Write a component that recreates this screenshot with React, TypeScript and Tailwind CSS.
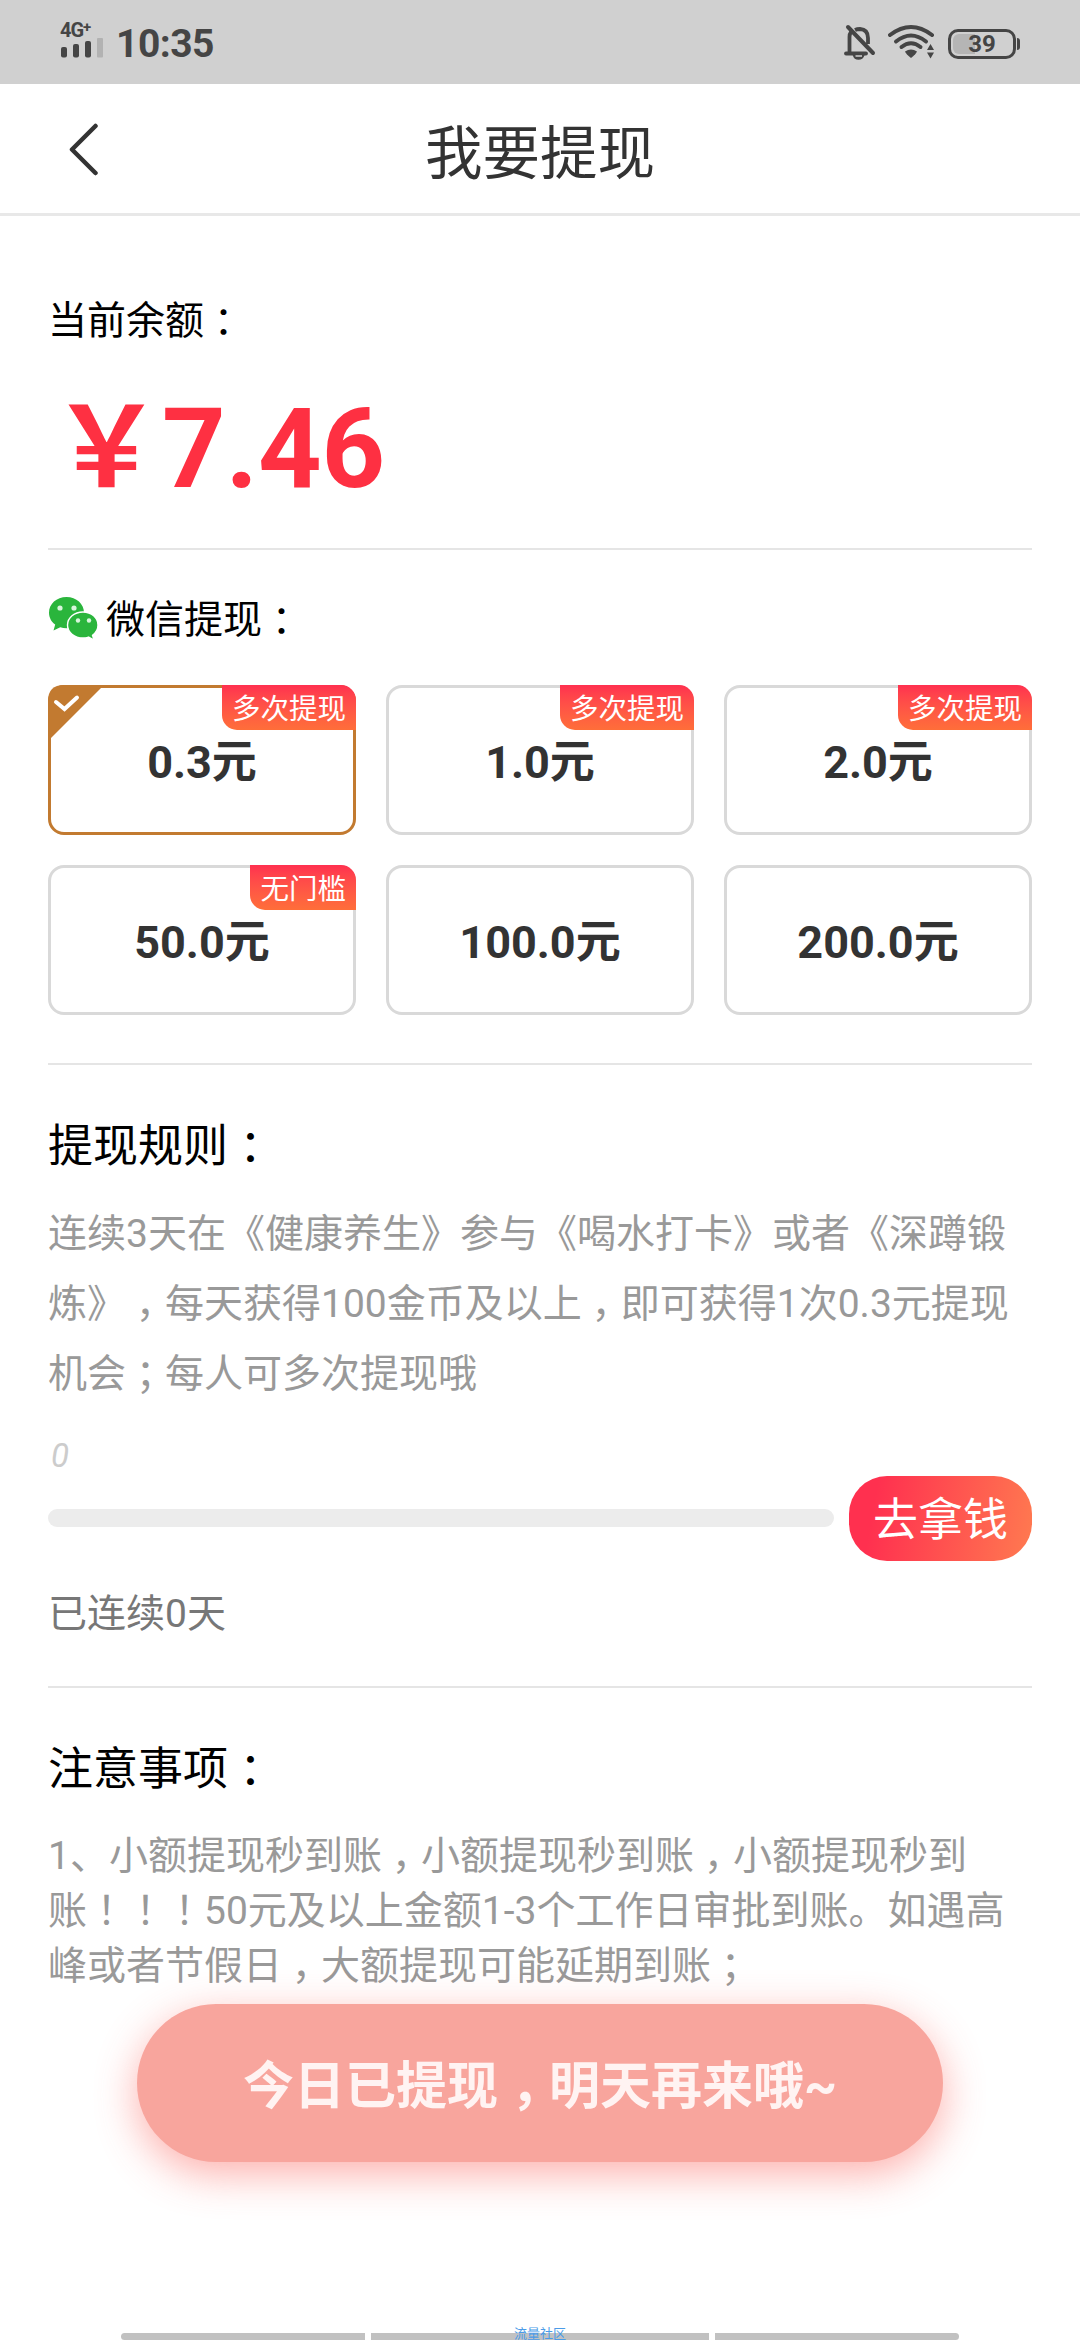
import { Fragment } from "react"
import { clsx } from "clsx"

type Amount = {
  id: number
  label: string
  tag?: string
}

const amounts: Amount[] = [
  { id: 1, label: "0.3元", tag: "多次提现" },
  { id: 2, label: "1.0元", tag: "多次提现" },
  { id: 3, label: "2.0元", tag: "多次提现" },
  { id: 4, label: "50.0元", tag: "无门槛" },
  { id: 5, label: "100.0元" },
  { id: 6, label: "200.0元" },
]

const rules = [
  "连续3天在《健康养生》参与《喝水打卡》或者《深蹲锻",
  "炼》，每天获得100金币及以上，即可获得1次0.3元提现",
  "机会；每人可多次提现哦",
]

const notes = [
  "1、小额提现秒到账，小额提现秒到账，小额提现秒到",
  "账！！！50元及以上金额1-3个工作日审批到账。如遇高",
  "峰或者节假日，大额提现可能延期到账；",
]

// full-width punctuation sits in the middle of its cell
function Cn({ children }: { children: string }) {
  return (
    <>
      {children.split(/([，：；！])/).map((part, i) =>
        /^[，：；！]$/.test(part) ? (
          <span
            key={i}
            className="inline-block w-[1em] text-center [font-feature-settings:'halt']"
          >
            {part}
          </span>
        ) : (
          <Fragment key={i}>{part}</Fragment>
        )
      )}
    </>
  )
}

function StatusBar() {
  return (
    <div className="flex h-[84px] items-start justify-between bg-[#d0d0d0] px-[60px] text-[#454545]">
      <div className="flex">
        <div className="mt-[20px] w-[43px]">
          <p className="h-[18px] text-[20px] leading-[20px] font-bold tracking-[-1px]">
            4G<sup className="-top-[0.35em] text-[15px]">+</sup>
          </p>
          <svg width="43" height="20" viewBox="0 0 43 20">
            <rect x="1" y="9" width="6" height="10.5" rx="2" fill="#454545" />
            <rect x="13" y="6" width="6" height="13.5" rx="2" fill="#454545" />
            <rect x="25" y="3" width="6" height="16.5" rx="2" fill="#454545" />
            <rect x="37" y="0" width="6" height="19.5" rx="1" fill="#b2b2b2" />
          </svg>
        </div>
        <p className="mt-[21px] ml-[13px] text-[39px] leading-[46px] font-bold tracking-[-0.5px]">
          10:35
        </p>
      </div>
      <div className="mt-[24px] flex">
        {/* muted bell */}
        <svg width="32" height="36" viewBox="0 0 32 36" fill="none">
          <path
            d="M5.500 29V13Q5.500 10 7 8M11 6Q13 5 16 5Q24 5.500 24 14V20"
            stroke="#454545"
            strokeWidth="3.800"
          />
          <path d="M2 29.500H22" stroke="#454545" strokeWidth="3.800" strokeLinecap="round" />
          <path d="M9.500 31Q10.500 35 14.500 35T19.800 31Z" fill="#454545" stroke="#454545" strokeWidth="1.500" />
          <path d="M11.500 32H18" stroke="#d0d0d0" strokeWidth="1.500" />
          <path d="M4 3L29 29" stroke="#454545" strokeWidth="4" strokeLinecap="round" />
        </svg>
        {/* wifi */}
        <svg className="ml-[12px]" width="48" height="36" viewBox="0 0 48 36" fill="none">
          <g stroke="#454545" strokeWidth="4" strokeLinecap="round">
            <path d="M2 11Q23 -5 44 11" />
            <path d="M8 17.500Q23 5.500 38 17.500" />
            <path d="M13.500 23Q23 15.500 32.500 23" />
          </g>
          <path d="M17 27.500Q23 23.500 29 27.500Q28 30 23.700 33.500Q23 34 22.300 33.500Q18 30 17 27.500Z" fill="#454545" />
          <path d="M42.500 20L46 26H39ZM42.500 34.500L46 28.500H39Z" fill="#454545" />
        </svg>
        {/* battery */}
        <div className="mt-[3px] ml-[12px] flex items-center">
          <div className="relative flex h-[30px] w-[68px] items-center justify-center rounded-[10px] border-[3px] border-[#454545]">
            <div className="absolute top-[2px] left-[2px] h-[20px] w-[22px] rounded-l-[6px] bg-[#b5b5b5]" />
            <span className="relative text-[24px] leading-[24px] font-bold">39</span>
          </div>
          <div className="ml-px h-[12px] w-[3px] rounded-r-[3px] bg-[#454545]" />
        </div>
      </div>
    </div>
  )
}

function Header() {
  return (
    <div className="flex h-[132px] items-center border-b-[3px] border-[#e8e8e8] px-[69px]">
      <svg className="mt-[2px]" width="30" height="54" viewBox="0 0 30 54" fill="none">
        <path
          d="M26.500 3L3 26.500L26.500 50"
          stroke="#333"
          strokeWidth="4.500"
          strokeLinecap="round"
          strokeLinejoin="round"
        />
      </svg>
      <h1 className="mt-[12px] mr-[30px] flex-1 text-center text-[57.5px] leading-[70px] text-[#333]">
        我要提现
      </h1>
    </div>
  )
}

function WechatIcon() {
  return (
    <svg width="51" height="44" viewBox="0 0 51 44" className="shrink-0">
      <path
        d="M18.500 1C8.500 1 1 8 1 16.700C1 21.500 3.400 25.700 7.200 28.600L5.500 34.500L12.300 31.200C14.200 31.900 16.300 32.300 18.500 32.300C28.500 32.300 36 25.300 36 16.700S28.500 1 18.500 1Z"
        fill="#2ab53c"
      />
      <path
        d="M35 16C26.300 16 19.500 21.800 19.500 29S26.300 42 35 42C37 42 38.800 41.700 40.500 41.100L46 44L44.500 39.200C47.900 36.800 50 33.100 50 29C50 21.800 43.500 16 35 16Z"
        fill="#2ab53c"
        stroke="#fff"
        strokeWidth="1.400"
      />
      <circle cx="12" cy="12" r="2.600" fill="#d8f5dc" />
      <circle cx="26" cy="12" r="2.600" fill="#d8f5dc" />
      <circle cx="30" cy="24.500" r="2.200" fill="#d8f5dc" />
      <circle cx="41" cy="24.500" r="2.200" fill="#d8f5dc" />
    </svg>
  )
}

function AmountCard({ item, active }: { item: Amount; active: boolean }) {
  return (
    <div
      className={clsx(
        "relative flex h-[150px] items-center justify-center rounded-[16px] border-[3px]",
        active ? "border-[#c27a30]" : "border-[#d9d9d9]"
      )}
    >
      {active && (
        <svg
          className="absolute -top-[3px] -left-[3px]"
          width="56"
          height="56"
          viewBox="0 0 56 56"
          fill="none"
        >
          <path d="M0 16Q0 0 16 0H56L0 56Z" fill="#c27a30" />
          <path d="M8 17L16.500 24L29 12.500" stroke="#fff" strokeWidth="4" strokeLinecap="round" />
        </svg>
      )}
      {item.tag && (
        <span className="absolute -top-[3px] -right-[3px] h-[45px] rounded-tr-[15px] rounded-bl-[15px] bg-linear-to-b from-[#ff304f] to-[#ff6e39] px-[10px] text-[28.5px] leading-[50px] text-white">
          {item.tag}
        </span>
      )}
      <span className="mt-[5px] text-[45px] leading-[54px] font-bold text-[#333]">
        {item.label}
      </span>
    </div>
  )
}

function Divider() {
  return <div className="h-[2px] bg-[#e5e5e5]" />
}

export default function App() {
  const selected = 1

  return (
    <div className="relative h-[2340px] w-[1080px] overflow-hidden bg-white font-[Roboto,'Noto_Sans_CJK_SC',sans-serif] text-black">
      <StatusBar />
      <Header />
      <div className="px-[48px]">
        {/* balance */}
        <p className="mt-[75px] text-[39px] leading-[60px]">
          <Cn>当前余额：</Cn>
        </p>
        <p className="mt-[33px] ml-[3px] h-[130px] text-[111px] leading-[130px] font-bold text-[#fe3042]">
          ￥7.46
        </p>
        <div className="mt-[34px]">
          <Divider />
        </div>

        {/* wechat amounts */}
        <div className="mt-[38px] flex h-[60px] items-center">
          <WechatIcon />
          <p className="mt-[4px] ml-[7px] text-[39px] leading-[60px]">
            <Cn>微信提现：</Cn>
          </p>
        </div>
        <div className="mt-[37px] grid grid-cols-3 gap-[30px]">
          {amounts.map((item) => (
            <AmountCard key={item.id} item={item} active={item.id === selected} />
          ))}
        </div>
        <div className="mt-[48px]">
          <Divider />
        </div>

        {/* rules */}
        <h2 className="mt-[52px] text-[45px] leading-[60px]">
          <Cn>提现规则：</Cn>
        </h2>
        <div className="mt-[22px] text-[39px] leading-[70px] whitespace-nowrap text-[#999]">
          {rules.map((line) => (
            <p key={line}>
              <Cn>{line}</Cn>
            </p>
          ))}
        </div>
        <div className="mt-[27px] flex h-[125px]">
          <div className="flex-1">
            <p className="ml-[3px] text-[33px] leading-[40px] text-[#ccc] italic">0</p>
            <div className="mt-[33px] h-[18px] rounded-full bg-[#ececec]" />
          </div>
          <button className="mt-[40px] ml-[15px] h-[85px] w-[183px] rounded-[38px] bg-linear-[100deg] from-[#ff304f] from-15% to-[#ff7a50] text-[45px] leading-[89px] text-white">
            去拿钱
          </button>
        </div>
        <p className="mt-[23px] text-[39px] leading-[60px] text-[#777]">已连续0天</p>
        <div className="mt-[42px]">
          <Divider />
        </div>

        {/* notes */}
        <h2 className="mt-[52px] text-[45px] leading-[60px]">
          <Cn>注意事项：</Cn>
        </h2>
        <div className="mt-[29px] text-[39px] leading-[55px] whitespace-nowrap text-[#999]">
          {notes.map((line) => (
            <p key={line}>
              <Cn>{line}</Cn>
            </p>
          ))}
        </div>
      </div>

      {/* floating button */}
      <button className="absolute top-[2004px] left-[137px] h-[158px] w-[806px] rounded-full bg-[#f8a59d] text-[51px] leading-[166px] font-bold text-[#fff3f2] shadow-[0_12px_42px_rgba(250,80,70,0.45)]">
        <Cn>今日已提现，明天再来哦~</Cn>
      </button>

      {/* gesture bar */}
      <div className="absolute inset-x-[121px] bottom-0 flex h-[7px] gap-[6px]">
        <div className="w-[244px] rounded-l-[4px] bg-[#c1c1c1]" />
        <div className="relative flex-1 bg-[#c1c1c1]">
          <span className="absolute -top-[6px] left-[143px] text-[13px] leading-[14px] whitespace-nowrap text-[#4a9be8]">
            流量社区
          </span>
        </div>
        <div className="w-[244px] rounded-r-[4px] bg-[#c1c1c1]" />
      </div>
    </div>
  )
}
